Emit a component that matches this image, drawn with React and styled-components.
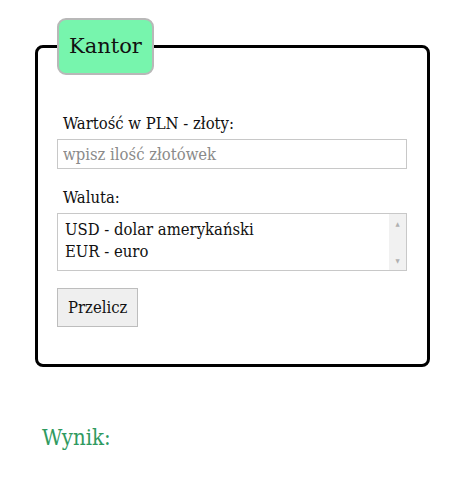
import React from 'react';
import styled, { createGlobalStyle } from 'styled-components';

const GlobalStyle = createGlobalStyle`
  body {
    margin: 0;
    font-family: 'DejaVu Serif Condensed', 'DejaVu Serif', 'Liberation Serif', serif;
    background: #fff;
    color: #111;
  }
`;

const Page = styled.div`
  padding: 18px 35px 0 35px;
  width: 395px;
`;

const Box = styled.fieldset`
  margin: 0;
  border: 3px solid #000;
  border-radius: 8px;
  padding: 39px 20px 37px 19px;
`;

const Legend = styled.legend`
  background: #77f5ad;
  border: 2px solid #b8b8b8;
  border-radius: 9px;
  padding: 0 10px;
  height: 53px;
  line-height: 53px;
  font-family: 'DejaVu Serif', serif;
  font-size: 21px;
  color: #111;
`;

const Field = styled.div`
  display: flex;
  flex-direction: column;
  margin-bottom: ${p => p.gap}px;
`;

const Label = styled.label`
  font-size: 16.5px;
  padding-left: 6px;
  line-height: 20px;
  margin-bottom: 5px;
`;

const TextInput = styled.input`
  box-sizing: border-box;
  width: 350px;
  height: 30px;
  border: 1px solid #c8c8c8;
  padding: 0 5px;
  font-family: inherit;
  font-size: 16.5px;
  outline: none;
  &::placeholder {
    color: #8a8a8a;
  }
`;

const ListBox = styled.div`
  box-sizing: border-box;
  width: 350px;
  height: 58px;
  border: 1px solid #c8c8c8;
  display: flex;
`;

const Options = styled.div`
  flex: 1;
  padding: 5px 7px;
  font-size: 16.5px;
  line-height: 22px;
`;

const Scroll = styled.div`
  width: 17px;
  background: #f1f1f1;
  display: flex;
  flex-direction: column;
  justify-content: space-between;
  align-items: center;
  padding: 6px 0;
  font-size: 6px;
  color: #b0b0b0;
`;

const Button = styled.button`
  box-sizing: border-box;
  height: 39px;
  padding: 0 10px;
  background: #efefef;
  border: 1px solid #bdbdbd;
  font-family: inherit;
  font-size: 16.5px;
  color: #111;
`;

const Result = styled.h3`
  margin: 58px 0 0 7px;
  font-weight: normal;
  font-size: 22px;
  color: #2f9a5f;
`;

export default function App() {
  return (
    <Page>
      <GlobalStyle />
      <Box>
        <Legend>Kantor</Legend>
        <Field gap={19}>
          <Label>Wartość w PLN - złoty:</Label>
          <TextInput placeholder="wpisz ilość złotówek" />
        </Field>
        <Field gap={17}>
          <Label>Waluta:</Label>
          <ListBox>
            <Options>
              <div>USD - dolar amerykański</div>
              <div>EUR - euro</div>
            </Options>
            <Scroll>
              <span>▲</span>
              <span>▼</span>
            </Scroll>
          </ListBox>
        </Field>
        <Button>Przelicz</Button>
      </Box>
      <Result>Wynik:</Result>
    </Page>
  );
}
